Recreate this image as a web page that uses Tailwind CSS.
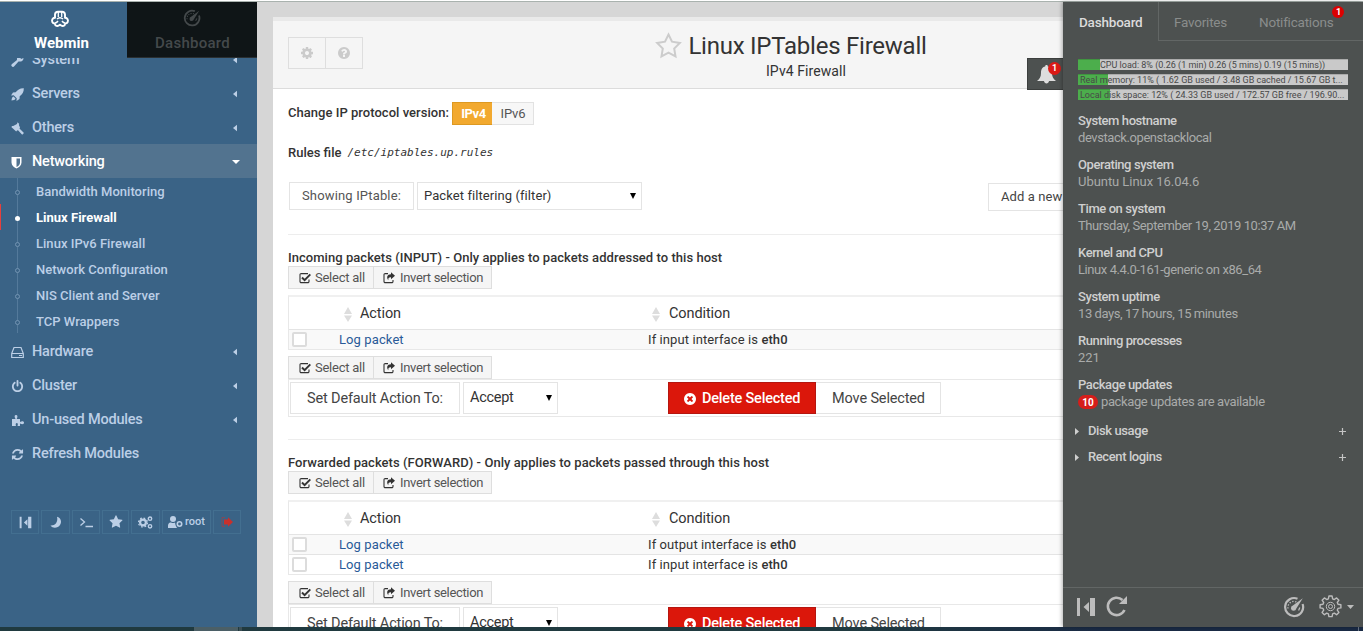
<!DOCTYPE html>
<html lang="en">
<head>
<meta charset="utf-8">
<title>Linux IPTables Firewall</title>
<script src="https://cdn.jsdelivr.net/npm/@tailwindcss/browser@4"></script>
</head>
<body class="overflow-hidden bg-white font-['Roboto',sans-serif] text-[13px] text-[#333]">
<svg class="hidden">
  <symbol id="cog" viewBox="0 0 1792 1792"><path d="M1152 896q0-106-75-181t-181-75-181 75-75 181 75 181 181 75 181-75 75-181zm512-109v222q0 12-8 23t-20 13l-185 28q-19 54-39 91 35 50 107 138 10 12 10 25t-9 23q-27 37-99 108t-94 71q-12 0-26-9l-138-108q-44 23-91 38-16 136-29 186-7 28-36 28h-222q-14 0-24.500-8.500t-11.500-21.500l-28-184q-49-16-90-37l-141 107q-10 9-25 9-14 0-25-11-126-114-165-168-7-10-7-23 0-12 8-23 15-21 51-66.500t54-70.500q-27-50-41-99l-183-27q-13-2-21-12.500t-8-23.500v-222q0-12 8-23t19-13l186-28q14-46 39-92-40-57-107-138-10-12-10-24 0-10 9-23 26-36 98.500-107.500t94.500-71.500q13 0 26 10l138 107q44-23 91-38 16-136 29-186 7-28 36-28h222q14 0 24.500 8.500t11.500 21.500l28 184q49 16 90 37l142-107q9-9 24-9 13 0 25 10 129 119 165 170 7 8 7 22 0 12-8 23-15 21-51 66.500t-54 70.500q26 50 41 98l183 28q13 2 21 12.500t8 23.500z"/></symbol>
  <symbol id="question" viewBox="0 0 1792 1792"><path d="M1024 1376v-192q0-14-9-23t-23-9h-192q-14 0-23 9t-9 23v192q0 14 9 23t23 9h192q14 0 23-9t9-23zm256-672q0-88-55.500-163t-138.500-116-170-41q-243 0-371 213-15 24 8 42l132 100q7 6 19 6 16 0 25-12 53-68 86-92 34-24 86-24 48 0 85.500 26t37.500 59q0 38-20 61t-68 45q-63 28-115.500 86.500t-52.500 125.500v36q0 14 9 23t23 9h192q14 0 23-9t9-23q0-19 21.500-49.500t54.500-49.500q32-18 49-28.500t46-35 44.500-48 28-60.500 12.500-81zm384 192q0 209-103 385.500t-279.500 279.500-385.500 103-385.500-103-279.500-279.500-103-385.500 103-385.500 279.500-279.500 385.500-103 385.500 103 279.500 279.500 103 385.500z"/></symbol>
  <symbol id="star" viewBox="0 0 1792 1792"><path d="M1728 647q0 22-26 48l-363 354 86 500q1 7 1 20 0 21-10.500 35.500t-30.500 14.500q-19 0-40-12l-449-236-449 236q-22 12-40 12-21 0-31.500-14.500t-10.500-35.500q0-6 2-20l86-500-364-354q-25-27-25-48 0-37 56-46l502-73 225-455q19-41 49-41t49 41l225 455 502 73q56 9 56 46z"/></symbol>
  <symbol id="power" viewBox="0 0 1792 1792"><path d="M1664 896q0 156-61 298t-164 245-245 164-298 61-298-61-245-164-164-245-61-298q0-182 80.500-343t226.500-270q43-32 95.500-25t83.500 50q32 42 24.500 94.500t-49.500 84.500q-98 74-151.500 181t-53.500 228q0 104 40.500 198.500t109.500 163.500 163.500 109.500 198.500 40.500 198.500-40.500 163.500-109.500 109.500-163.500 40.500-198.500q0-121-53.500-228t-151.500-181q-42-32-49.500-84.500t24.500-94.500q31-43 84-50t95 25q146 109 226.500 270t80.500 343zm-640-768v640q0 52-38 90t-90 38-90-38-38-90v-640q0-52 38-90t90-38 90 38 38 90z"/></symbol>
  <symbol id="refresh" viewBox="0 0 1792 1792"><path d="M1639 1056q0 5-1 7-64 268-268 434.500t-478 166.500q-146 0-282.500-55t-243.500-157l-129 129q-19 19-45 19t-45-19-19-45v-448q0-26 19-45t45-19h448q26 0 45 19t19 45-19 45l-137 137q71 66 161 102t187 36q134 0 250-65t186-179q11-17 53-117 8-23 30-23h192q13 0 22.500 9.500t9.500 22.500zm25-800v448q0 26-19 45t-45 19h-448q-26 0-45-19t-19-45 19-45l138-138q-148-137-349-137-134 0-250 65t-186 179q-11 17-53 117-8 23-30 23h-199q-13 0-22.500-9.500t-9.500-22.500v-7q65-268 270-434.500t480-166.500q146 0 284 55.500t245 156.500l130-129q19-19 45-19t45 19 19 45z"/></symbol>
  <symbol id="times" viewBox="0 0 1792 1792"><path d="M1277 1122q0-26-19-45l-181-181 181-181q19-19 19-45 0-27-19-46l-90-90q-19-19-46-19-26 0-45 19l-181 181-181-181q-19-19-45-19-27 0-46 19l-90 90q-19 19-19 46 0 26 19 45l181 181-181 181q-19 19-19 45 0 27 19 46l90 90q19 19 46 19 26 0 45-19l181-181 181 181q19 19 45 19 27 0 46-19l90-90q19-19 19-46zm387-226q0 209-103 385.500t-279.500 279.500-385.500 103-385.500-103-279.500-279.500-103-385.500 103-385.500 279.500-279.500 385.500-103 385.500 103 279.500 279.500 103 385.500z"/></symbol>
  <symbol id="check" viewBox="0 0 12 12"><path d="M9 1.600H2.200A1.200 1.200 0 0 0 1 2.800v6.600a1.200 1.200 0 0 0 1.200 1.200h6.600A1.200 1.200 0 0 0 10 9.400V7.500" fill="none" stroke="currentColor" stroke-width="1.100"/><path d="M3 5.500l2.600 2.600L11.300 2.400" fill="none" stroke="currentColor" stroke-width="2"/></symbol>
  <symbol id="share" viewBox="0 0 12 12"><path d="M5 1.600H2.200A1.200 1.200 0 0 0 1 2.800v6.600a1.200 1.200 0 0 0 1.200 1.200h6.600A1.200 1.200 0 0 0 10 9.400V8" fill="none" stroke="currentColor" stroke-width="1.100"/><path d="M8 .2 12 3.700 8 7.200V5.200C5.800 5.100 5 6 5.400 8.300 3.200 5.400 4 2.300 8 2.200z"/></symbol>
  <symbol id="gauge" viewBox="0 0 22 22"><path d="M14.500 2.700A9 9 0 1 0 19.600 8" fill="none" stroke="currentColor" stroke-width="2.200"/><path d="M5 12.500A6 6 0 0 1 13.500 6" fill="none" stroke="currentColor" stroke-width="1.300" stroke-dasharray="1.300 1.600"/><path d="M19.800 2.200 13.300 12.600a2.700 2.700 0 1 1-3.400-3.100z"/><path d="M15.600 14.500l1.200-3" fill="none" stroke="currentColor" stroke-width="1.200"/></symbol>
  <symbol id="collapse" viewBox="0 0 20 20"><path d="M1 1h3v18H1zM14 1h5v18h-5zM13 5v10L7.500 10z"/></symbol>
  <symbol id="left" viewBox="0 0 5 8"><path d="M5 0v8L0 4z"/></symbol>
  <symbol id="sort" viewBox="0 0 8 15"><path d="M0 7 4 0l4 7zM0 8.500h8L4 15z"/></symbol>
</svg>
<div class="flex h-[631px] w-[1363px] flex-col overflow-hidden">
  <div class="h-[2px] shrink-0 border-b border-[#a9b2ae]"></div>
  <div class="flex h-[625px] shrink-0">

    <!-- Navigation -->
    <aside class="flex w-[257px] shrink-0 flex-col bg-[#3a6386] text-[#bccfe6]">
      <div class="flex h-[56px] shrink-0 text-[15px] font-medium leading-[18px]">
        <div class="flex w-[127px] flex-col items-center pt-2 pr-1 font-bold text-white">
          <svg class="ml-[-3px] h-[18px] w-[20px]" viewBox="0 0 20 18" fill="none" stroke="currentColor" stroke-width="1.900" stroke-linejoin="round"><path d="M5 8.500V4.500A3 3 0 0 1 8 1.700h4a3 3 0 0 1 3 2.800v4"/><path d="M8.300 2v5M11.700 2v5" stroke-width="1.300"/><path d="M5 7.500C2.500 8 1.500 10 2.300 12c.6 1.300 1.700 1.500 2.400 1.500C5 16 7.500 17 10 14.800c2.500 2.200 5 1.200 5.300-1.300.7 0 1.800-.2 2.400-1.500.8-2-.2-4-2.700-4.500"/><path d="M5 13c1.500 0 2.300-1 3-2M15 13c-1.500 0-2.300-1-3-2M7 9c1.800-1.600 4.200-1.600 6 0" stroke-width="1.500"/></svg>
          <span class="mt-[6px]">Webmin</span>
        </div>
        <div class="flex flex-1 flex-col items-center border-b border-[#2a2f31] bg-[#0f1517] pt-[7px] text-[#44494b]">
          <svg class="size-[18px]" fill="currentColor"><use href="#gauge"/></svg>
          <span class="mt-[7px] pl-px tracking-[0.25px]">Dashboard</span>
        </div>
      </div>
      <nav class="h-[412px] overflow-hidden">
        <div class="-mt-4 text-[14.500px] font-medium tracking-[-0.2px]">
          <div class="flex h-[34px] items-center pl-[11px] pr-5 pt-[2px]"><svg class="mr-2 h-[13px] w-[13px]" viewBox="0 0 13 13" fill="currentColor"><path d="M1 12.500C0 11.500 0 11 1 10l5-4C5.500 3 8 0 11 1L9 3l1 2 2.500-1C12.500 7 10 8 7.500 7.500L3 12.500c-.7.700-1.300.700-2 0z"/></svg><span class="flex-1">System</span><svg class="h-2 w-[4px]" fill="currentColor"><use href="#left"/></svg></div>
          <div class="flex h-[34px] items-center pl-[11px] pr-5 pt-[2px]"><svg class="mr-2 h-[13px] w-[13px]" viewBox="0 0 13 13" fill="currentColor"><path d="M12.800.2C9 0 6.500 1.800 4.700 4.300L2 4.500 0 7.500l2.700-.2 3 3L5.500 13l3-2 .2-2.700C11.200 6.500 13 4 12.800.2zM2.500 8.500C1 9 .8 10.500.5 12.500c2-.3 3.500-.5 4-2z"/></svg><span class="flex-1">Servers</span><svg class="h-2 w-[4px]" fill="currentColor"><use href="#left"/></svg></div>
          <div class="flex h-[34px] items-center pl-[11px] pr-5 pt-[2px]"><svg class="mr-2 h-[13px] w-[13px]" viewBox="0 0 13 13" fill="currentColor"><path d="M6.500.3 8.300 2 7.800 2.800 9 5.500l-.5 1L13 11l-1.800 1.800L7 8.300l-1 .2-.8 1L.3 5 1.200 4l1 .1L6 2z"/></svg><span class="flex-1">Others</span><svg class="h-2 w-[4px]" fill="currentColor"><use href="#left"/></svg></div>
          <div class="flex h-[34px] items-center bg-[#52738f] pl-[11px] pr-[17px] pt-[2px] text-white"><svg class="mr-2 h-[13px] w-[13px]" viewBox="0 0 13 13" fill="currentColor"><path fill-rule="evenodd" d="M.5 1h10v5.500c0 3-2.500 5-5 6-2.500-1-5-3-5-6zM5.500 2.500V11c2-1 3.500-2.500 3.500-4.500v-4z"/></svg><span class="flex-1">Networking</span><svg class="h-1 w-2" viewBox="0 0 8 4" fill="currentColor"><path d="M0 0h8L4 4z"/></svg></div>
          <div class="relative text-[13px] tracking-[0.02px]">
            <div class="absolute bottom-[1px] left-[17px] top-0 w-px bg-[#547a9b]"></div>
            <div class="relative flex h-[26px] items-center pl-[15px] pt-[2px]"><i class="mr-4 size-[5px] rounded-full border border-[#7394b2] bg-[#3a6386]"></i>Bandwidth Monitoring</div>
            <div class="relative flex h-[26px] items-center border-l border-[#e8403c] pl-[14px] pt-[2px] font-bold tracking-[0.02px] text-white"><i class="mr-4 size-[5px] rounded-full bg-white"></i>Linux Firewall</div>
            <div class="relative flex h-[26px] items-center pl-[15px] pt-[2px]"><i class="mr-4 size-[5px] rounded-full border border-[#7394b2] bg-[#3a6386]"></i>Linux IPv6 Firewall</div>
            <div class="relative flex h-[26px] items-center pl-[15px] pt-[2px]"><i class="mr-4 size-[5px] rounded-full border border-[#7394b2] bg-[#3a6386]"></i>Network Configuration</div>
            <div class="relative flex h-[26px] items-center pl-[15px] pt-[2px]"><i class="mr-4 size-[5px] rounded-full border border-[#7394b2] bg-[#3a6386]"></i>NIS Client and Server</div>
            <div class="relative flex h-[26px] items-center pl-[15px] pt-[2px]"><i class="mr-4 size-[5px] rounded-full border border-[#7394b2] bg-[#3a6386]"></i>TCP Wrappers</div>
          </div>
          <div class="flex h-[34px] items-center pl-[11px] pr-5 pt-[2px]"><svg class="mr-2 h-[13px] w-[13px]" viewBox="0 0 13 13" fill="none" stroke="currentColor"><path d="M.7 7.500 3 1.500h7l2.300 6v4H.7zM.7 7.500h11.600M8 9.500h3" stroke-width="1.200"/></svg><span class="flex-1">Hardware</span><svg class="h-2 w-[4px]" fill="currentColor"><use href="#left"/></svg></div>
          <div class="flex h-[34px] items-center pl-[11px] pr-5 pt-[2px]"><svg class="mr-2 size-[13px]" fill="currentColor"><use href="#power"/></svg><span class="flex-1">Cluster</span><svg class="h-2 w-[4px]" fill="currentColor"><use href="#left"/></svg></div>
          <div class="flex h-[34px] items-center pl-[11px] pr-5 pt-[2px]"><svg class="mr-2 size-[13px]" viewBox="0 0 13 13" fill="currentColor"><path d="M1 5h3.500C3 2.500 3.500 1 5 1s2 1.500.7 4H9v3c2-1.300 4-1 4 .7S11 10.500 9 9.500V12H6.500c.8-2 .2-3-.7-3s-1.500 1-.8 3H1z"/></svg><span class="flex-1">Un-used Modules</span><svg class="h-2 w-[4px]" fill="currentColor"><use href="#left"/></svg></div>
          <div class="flex h-[34px] items-center pl-[11px] pt-[2px]"><svg class="mr-2 size-[13px]" fill="currentColor"><use href="#refresh"/></svg>Refresh Modules</div>
        </div>
      </nav>
      <div class="mt-10 ml-[11px] flex h-6 gap-[2px] text-[11px] font-medium *:flex *:items-center *:justify-center *:border *:border-[#436f90]">
        <div class="w-7"><svg class="size-[13px]" fill="currentColor"><use href="#collapse"/></svg></div>
        <div class="w-[29px]"><svg class="size-[13px]" viewBox="0 0 13 13" fill="currentColor"><path d="M8 .8C12 2 13 6 11 9S4 13 1.500 9.500c4 .5 8-3 6.500-8.700z"/></svg></div>
        <div class="w-7"><svg class="h-[11px] w-[13px]" viewBox="0 0 13 11" fill="none" stroke="currentColor" stroke-width="1.300"><path d="M.5 1.500 4.500 5l-4 3.500M5.500 9.500H13"/></svg></div>
        <div class="w-[27px]"><svg class="size-[14px]" fill="currentColor"><use href="#star"/></svg></div>
        <div class="w-[29px]"><svg class="h-[13px] w-[15px]" viewBox="0 0 15 13" fill="none" stroke="currentColor"><circle cx="5" cy="6.500" r="2.900" stroke-width="2.200"/><circle cx="5" cy="6.500" r="4.500" stroke-width="1.200" stroke-dasharray="1.770 1.770"/><circle cx="12" cy="2.700" r="1.700" stroke-width="1.400"/><circle cx="12" cy="10.300" r="1.700" stroke-width="1.400"/></svg></div>
        <div class="w-[49px] gap-[2px]"><svg class="h-[12px] w-[15px]" viewBox="0 0 15 12" fill="currentColor"><circle cx="5" cy="3" r="3"/><path d="M0 12V9.500C0 7 2 6.500 3 6.500c2 1 3 .5 4 0L7.500 9 9 12z"/><circle cx="11.500" cy="8" r="2.200" fill="none" stroke="currentColor" stroke-width="1.600"/></svg>root</div>
        <div class="w-7 text-[#c8302c]"><svg class="h-[10px] w-[12px]" viewBox="0 0 12 10"><path d="M4 .5H1v9h3" fill="none" stroke="currentColor" stroke-opacity=".5"/><path fill="currentColor" d="M3 2.500h4V.3L12 5 7 9.700V7.500H3z"/></svg></div>
      </div>
    </aside>

    <!-- Module content -->
    <main class="relative w-[806px] shrink-0 overflow-hidden bg-[#d6d6d6] pl-4 pt-[15px]">
      <div class="w-[1066px] bg-white">
        <header class="flex h-[72px] border-b border-t-4 border-b-[#dcdcdc] border-t-[#e9e9e9] bg-[#f5f5f5] pl-[15px]">
          <div class="mt-4 flex h-8 w-[75px] shrink-0 divide-x divide-[#dedede] border border-[#dedede] text-[#cbcbcb]">
            <div class="flex flex-1 items-center justify-center"><svg class="size-[14px]" fill="currentColor"><use href="#cog"/></svg></div>
            <div class="flex flex-1 items-center justify-center"><svg class="size-[14px]" fill="currentColor"><use href="#question"/></svg></div>
          </div>
          <div class="flex w-[886px] flex-col items-center pt-3">
            <div class="flex h-[27px] items-center pr-[30px] text-[24px] leading-[27px]"><svg class="mb-[3px] mr-[6px] size-[27px]" viewBox="0 0 27 27" fill="none" stroke="#ccc" stroke-width="2"><path d="M13.500 2.500 17 9.700l7.800 1.200-5.600 5.600 1.300 7.900-7-3.700-7 3.700 1.300-7.900L2.200 10.900 10 9.700z"/></svg><span class="tracking-[-0.24px]">Linux IPTables Firewall</span></div>
            <div class="text-sm leading-[22px] tracking-[0.08px]">IPv4 Firewall</div>
          </div>
        </header>
        <div class="pl-[15px]">
          <div class="mt-[13px] flex h-[23px] items-center font-medium"><span class="w-[164px] pb-[2px] tracking-[0.03px]">Change IP protocol version:</span>
            <div class="flex h-[23px] text-[13px]"><span class="flex w-10 items-center justify-center border border-r-0 border-[#dd9922] bg-[#f2a92f] pl-[2px] font-bold tracking-[-0.4px] text-white">IPv4</span><span class="flex w-[42px] items-center justify-center border border-l-0 border-[#e2e2e2] bg-[#f7f7f7] pl-px font-normal tracking-[-0.1px] text-[#555]">IPv6</span></div>
          </div>
          <div class="mt-[18px] flex h-5 items-center font-medium">Rules file<span class="ml-[6px] pt-px font-['DejaVu_Sans_Mono',monospace] text-[11px] font-normal italic">/etc/iptables.up.rules</span></div>
          <div class="mt-[19px] ml-px flex h-[29px] items-start text-[13px] tracking-[0.1px]">
            <div class="flex h-7 w-[125px] items-center justify-center border border-[#e4e4e4] tracking-[0.15px] text-[#555]">Showing IPtable:</div>
            <div class="ml-[3px] flex h-7 w-[225px] items-center justify-between border border-[#e4e4e4] pl-[6px] pr-[5px] tracking-[0.08px]">Packet filtering (filter)<svg class="h-[6px] w-[6px]" viewBox="0 0 6 6"><path d="M0 0h6L3 6z"/></svg></div>
            <div class="ml-[346px] mt-px flex h-7 w-[150px] items-center whitespace-nowrap border border-[#e4e4e4] pl-3 text-[#444]">Add a new chain named:</div>
          </div>
          <div class="mt-[23px] border-t border-[#ededed]"></div>

          <section>
            <h2 class="mt-[14px] h-[17px] font-medium leading-[17px] tracking-[0.04px]">Incoming packets (INPUT) - Only applies to packets addressed to this host</h2>
            <div class="flex h-[23px] w-[204px] divide-x divide-[#dedede] border border-[#dedede] bg-[#f5f5f5] tracking-[-0.25px] text-[#555]"><span class="flex w-[85px] items-center pl-[10px]"><svg class="mr-1 size-3 text-[#333]" fill="currentColor"><use href="#check"/></svg>Select all</span><span class="flex flex-1 items-center pl-[9px] tracking-[-0.34px]"><svg class="mr-[5px] size-3 text-[#333]" fill="currentColor"><use href="#share"/></svg>Invert selection</span></div>
            <div class="mt-[6px] border border-t-2 border-[#e8e8e8] border-t-[#f0f0f0]">
              <div class="flex h-[33px] items-center border-b border-[#e4e4e4] pt-[2px] text-[14.500px] tracking-[-0.1px]"><svg class="ml-[55px] mr-2 h-[15px] w-2 fill-[#ddd]"><use href="#sort"/></svg><span class="w-[292px]">Action</span><svg class="mr-[9px] h-[15px] w-2 fill-[#ddd]"><use href="#sort"/></svg>Condition</div>
              <div class="flex h-[19px] items-center bg-[#f9f9f9] tracking-[0.1px]"><i class="ml-[3px] mr-8 size-[15px] rounded-[2px] border-2 border-[#dcdcdc] bg-white"></i><span class="w-[309px] text-[#2a5a98]">Log packet</span><span>If input interface is <b class="font-medium">eth0</b></span></div>
            </div>
            <div class="mt-[6px] flex h-[23px] w-[204px] divide-x divide-[#dedede] border border-[#dedede] bg-[#f5f5f5] tracking-[-0.25px] text-[#555]"><span class="flex w-[85px] items-center pl-[10px]"><svg class="mr-1 size-3 text-[#333]" fill="currentColor"><use href="#check"/></svg>Select all</span><span class="flex flex-1 items-center pl-[9px] tracking-[-0.34px]"><svg class="mr-[5px] size-3 text-[#333]" fill="currentColor"><use href="#share"/></svg>Invert selection</span></div>
            <div class="flex h-[38px] items-start border border-[#e8e8e8] pl-px pt-[2px] text-[14.500px] tracking-[-0.15px]">
              <div class="flex h-8 w-[170px] items-center justify-center border border-[#e4e4e4] pt-[2px] text-[#444]">Set Default Action To:</div>
              <div class="ml-[3px] flex h-8 w-[95px] items-center justify-between border border-[#e4e4e4] pl-[6px] pr-[5px] tracking-[-0.3px]">Accept<svg class="h-[6px] w-[6px]" viewBox="0 0 6 6"><path d="M0 0h6L3 6z"/></svg></div>
              <div class="ml-[110px] flex h-8 w-[148px] items-center border border-[#b51610] bg-[#db170b] pl-[14px] pt-[2px] font-medium tracking-[-0.2px] text-white"><svg class="mr-[5px] size-[14px]" fill="currentColor"><use href="#times"/></svg>Delete Selected</div>
              <div class="flex h-8 w-[125px] items-center justify-center border border-l-0 border-[#e4e4e4] pl-px pt-[2px] text-[#444]">Move Selected</div>
            </div>
            <div class="mt-[22px] border-t border-[#ededed]"></div>
          </section>

          <section>
            <h2 class="mt-[14px] h-[17px] font-medium leading-[17px] tracking-[0.055px]">Forwarded packets (FORWARD) - Only applies to packets passed through this host</h2>
            <div class="flex h-[23px] w-[204px] divide-x divide-[#dedede] border border-[#dedede] bg-[#f5f5f5] tracking-[-0.25px] text-[#555]"><span class="flex w-[85px] items-center pl-[10px]"><svg class="mr-1 size-3 text-[#333]" fill="currentColor"><use href="#check"/></svg>Select all</span><span class="flex flex-1 items-center pl-[9px] tracking-[-0.34px]"><svg class="mr-[5px] size-3 text-[#333]" fill="currentColor"><use href="#share"/></svg>Invert selection</span></div>
            <div class="mt-[6px] border border-t-2 border-[#e8e8e8] border-t-[#f0f0f0]">
              <div class="flex h-[33px] items-center border-b border-[#e4e4e4] pt-[2px] text-[14.500px] tracking-[-0.1px]"><svg class="ml-[55px] mr-2 h-[15px] w-2 fill-[#ddd]"><use href="#sort"/></svg><span class="w-[292px]">Action</span><svg class="mr-[9px] h-[15px] w-2 fill-[#ddd]"><use href="#sort"/></svg>Condition</div>
              <div class="flex h-[20px] items-center border-b border-[#e4e4e4] bg-[#f9f9f9] tracking-[0.1px]"><i class="ml-[3px] mr-8 size-[15px] rounded-[2px] border-2 border-[#dcdcdc] bg-white"></i><span class="w-[309px] text-[#2a5a98]">Log packet</span><span>If output interface is <b class="font-medium">eth0</b></span></div>
              <div class="flex h-[19px] items-center tracking-[0.1px]"><i class="ml-[3px] mr-8 size-[15px] rounded-[2px] border-2 border-[#dcdcdc] bg-white"></i><span class="w-[309px] text-[#2a5a98]">Log packet</span><span>If input interface is <b class="font-medium">eth0</b></span></div>
            </div>
            <div class="mt-[6px] flex h-[23px] w-[204px] divide-x divide-[#dedede] border border-[#dedede] bg-[#f5f5f5] tracking-[-0.25px] text-[#555]"><span class="flex w-[85px] items-center pl-[10px]"><svg class="mr-1 size-3 text-[#333]" fill="currentColor"><use href="#check"/></svg>Select all</span><span class="flex flex-1 items-center pl-[9px] tracking-[-0.34px]"><svg class="mr-[5px] size-3 text-[#333]" fill="currentColor"><use href="#share"/></svg>Invert selection</span></div>
            <div class="flex h-[38px] items-start border border-[#e8e8e8] pl-px pt-[2px] text-[14.500px] tracking-[-0.15px]">
              <div class="flex h-8 w-[170px] items-center justify-center border border-[#e4e4e4] pt-[2px] text-[#444]">Set Default Action To:</div>
              <div class="ml-[3px] flex h-8 w-[95px] items-center justify-between border border-[#e4e4e4] pl-[6px] pr-[5px] tracking-[-0.3px]">Accept<svg class="h-[6px] w-[6px]" viewBox="0 0 6 6"><path d="M0 0h6L3 6z"/></svg></div>
              <div class="ml-[110px] flex h-8 w-[148px] items-center border border-[#b51610] bg-[#db170b] pl-[14px] pt-[2px] font-medium tracking-[-0.2px] text-white"><svg class="mr-[5px] size-[14px]" fill="currentColor"><use href="#times"/></svg>Delete Selected</div>
              <div class="flex h-8 w-[125px] items-center justify-center border border-l-0 border-[#e4e4e4] pl-px pt-[2px] text-[#444]">Move Selected</div>
            </div>
          </section>
        </div>
      </div>
      <div class="absolute right-0 top-14 flex h-8 w-9 items-center border border-r-0 border-[#3c3f3e] bg-[#4d5150] pl-[9px]">
        <svg class="size-[19px] fill-[#ddd]" viewBox="0 0 19 19"><path d="M9.500 0c1 0 1.300.6 1.300 1.400C14 2 15 4.500 15 8c0 4 1.500 6 4 8h-7c-.3 3.300-4.700 3.300-5 0H0c2.500-2 4-4 4-8 0-3.500 1-6 4.200-6.600C8.200.6 8.500 0 9.500 0z"/></svg>
        <span class="absolute right-[2px] top-[3px] flex size-[13px] items-center justify-center rounded-full bg-[#db1a16] text-[9px] font-bold text-white">1</span>
      </div>
    </main>

    <!-- System information -->
    <aside class="relative flex w-[300px] shrink-0 flex-col bg-[#4d5150] text-[#b3b5b4] shadow-[-1px_0_4px_rgba(0,0,0,0.3)]">
      <div class="flex h-[39px] shrink-0 text-[13.500px] leading-10 text-[#8a8d8c]">
        <div class="w-[96px] border-r border-[#626665] pl-4 font-medium tracking-[-0.2px] text-[#dcdcdc]">Dashboard</div>
        <div class="flex flex-1 border-b border-[#626665] tracking-[-0.22px]"><span class="w-[85px] pl-[15px]">Favorites</span><span class="relative pl-[15px]">Notifications<b class="absolute -right-[11px] top-1 flex size-3 items-center justify-center rounded-full bg-[#db0000] text-[9px] leading-none text-white">1</b></span></div>
      </div>
      <div class="mx-[15px] mt-[18px] flex flex-col gap-1 text-[9px] leading-[10px] text-[#484848] *:h-[11px] *:overflow-hidden *:whitespace-nowrap *:border-t *:border-t-black/15">
        <div class="bg-[linear-gradient(90deg,#4cae4c_22px,#c9c9c9_22px)] pl-[22px]">CPU load: 8% (0.26 (1 min) 0.26 (5 mins) 0.19 (15 mins))</div>
        <div class="bg-[linear-gradient(90deg,#4cae4c_30px,#c9c9c9_30px)] pl-[2px]">Real memory: 11% ( 1.62 GB used / 3.48 GB cached / 15.67 GB t...</div>
        <div class="bg-[linear-gradient(90deg,#4cae4c_32px,#c9c9c9_32px)] pl-[2px]">Local disk space: 12% ( 24.33 GB used / 172.57 GB free / 196.90...</div>
      </div>
      <dl class="mt-3 ml-[15px] text-[13px] leading-[17px] tracking-[-0.42px] [&_dt]:font-medium [&_dt]:text-[#cfcfcf] [&_dd]:mb-[10px] [&_dd]:text-[#a9abaa]">
        <dt>System hostname</dt><dd>devstack.openstacklocal</dd>
        <dt>Operating system</dt><dd class="tracking-[-0.05px]">Ubuntu Linux 16.04.6</dd>
        <dt>Time on system</dt><dd>Thursday, September 19, 2019 10:37 AM</dd>
        <dt>Kernel and CPU</dt><dd>Linux 4.4.0-161-generic on x86_64</dd>
        <dt>System uptime</dt><dd>13 days, 17 hours, 15 minutes</dd>
        <dt>Running processes</dt><dd class="tracking-normal">221</dd>
        <dt>Package updates</dt><dd class="flex items-center tracking-[-0.38px]"><span class="mr-[3px] mt-px flex h-[14px] w-5 items-center justify-center rounded-full bg-[#d61d1a] text-[10px] font-bold tracking-normal text-white">10</span>package updates are available</dd>
      </dl>
      <div class="-mt-[2px] flex h-[26px] items-center pl-3 pr-[17px] text-[13px] font-medium tracking-[-0.4px] text-[#cfcfcf]"><svg class="mr-[9px] h-[7px] w-1 fill-[#cfcfcf]" viewBox="0 0 4 7"><path d="M0 0v7l4-3.500z"/></svg><span class="flex-1">Disk usage</span><svg class="size-[7px]" viewBox="0 0 7 7"><path d="M3.500 0v7M0 3.500h7" stroke="#c4c4c4" stroke-width="1.200"/></svg></div>
      <div class="flex h-[26px] items-center pl-3 pr-[17px] text-[13px] font-medium tracking-[-0.4px] text-[#cfcfcf]"><svg class="mr-[9px] h-[7px] w-1 fill-[#cfcfcf]" viewBox="0 0 4 7"><path d="M0 0v7l4-3.500z"/></svg><span class="flex-1">Recent logins</span><svg class="size-[7px]" viewBox="0 0 7 7"><path d="M3.500 0v7M0 3.500h7" stroke="#c4c4c4" stroke-width="1.200"/></svg></div>
      <div class="mt-auto flex h-10 shrink-0 items-center border-t border-[#626665] pb-[2px] pl-[13px] pr-[9px] text-[#bcbcbc]">
        <svg class="mr-[9px] size-[20px]" fill="currentColor"><use href="#collapse"/></svg>
        <svg class="size-[23px]" viewBox="0 0 23 23"><path d="M19.500 15A8.700 8.700 0 1 1 17.500 5" fill="none" stroke="currentColor" stroke-width="2.600"/><path d="M22 1v8h-8z" fill="currentColor"/></svg>
        <svg class="ml-auto mr-[14px] size-[22px]" fill="currentColor"><use href="#gauge"/></svg>
        <svg class="size-[23px]" viewBox="0 0 23 23" fill="none" stroke="currentColor"><path stroke-width="1.400" stroke-linejoin="round" d="M9.900 1h3.200l.5 2.800 1.700.7 2.300-1.600 2.300 2.300-1.600 2.300.7 1.700 2.900.5v3.200l-2.900.5-.7 1.700 1.600 2.300-2.300 2.300-2.300-1.600-1.700.7-.5 2.800H9.900l-.5-2.800-1.700-.7-2.300 1.600-2.300-2.300 1.600-2.300-.7-1.700-2.900-.5V9.700L4 9.200l.7-1.700-1.600-2.300 2.300-2.300 2.300 1.600 1.700-.7z"/><circle cx="11.500" cy="11.500" r="4.200"/><circle cx="11.500" cy="11.500" r="2"/></svg>
        <svg class="ml-[5px] h-1 w-[7px]" viewBox="0 0 7 4" fill="currentColor"><path d="M0 0h7L3.500 4z"/></svg>
      </div>
    </aside>
  </div>

  <!-- Desktop taskbar edge -->
  <div class="flex h-1 shrink-0 bg-[linear-gradient(90deg,#203a3f_0,#203a40_850px,#1a2b45_1100px)]">
    <div class="ml-[194px] w-[44px] bg-[#4b5f66]"></div><div class="ml-px w-[3px] bg-[#3c4f55]"></div>
    <div class="ml-auto mr-1 w-px bg-[#6b7688]"></div>
  </div>
</div>
</body>
</html>
